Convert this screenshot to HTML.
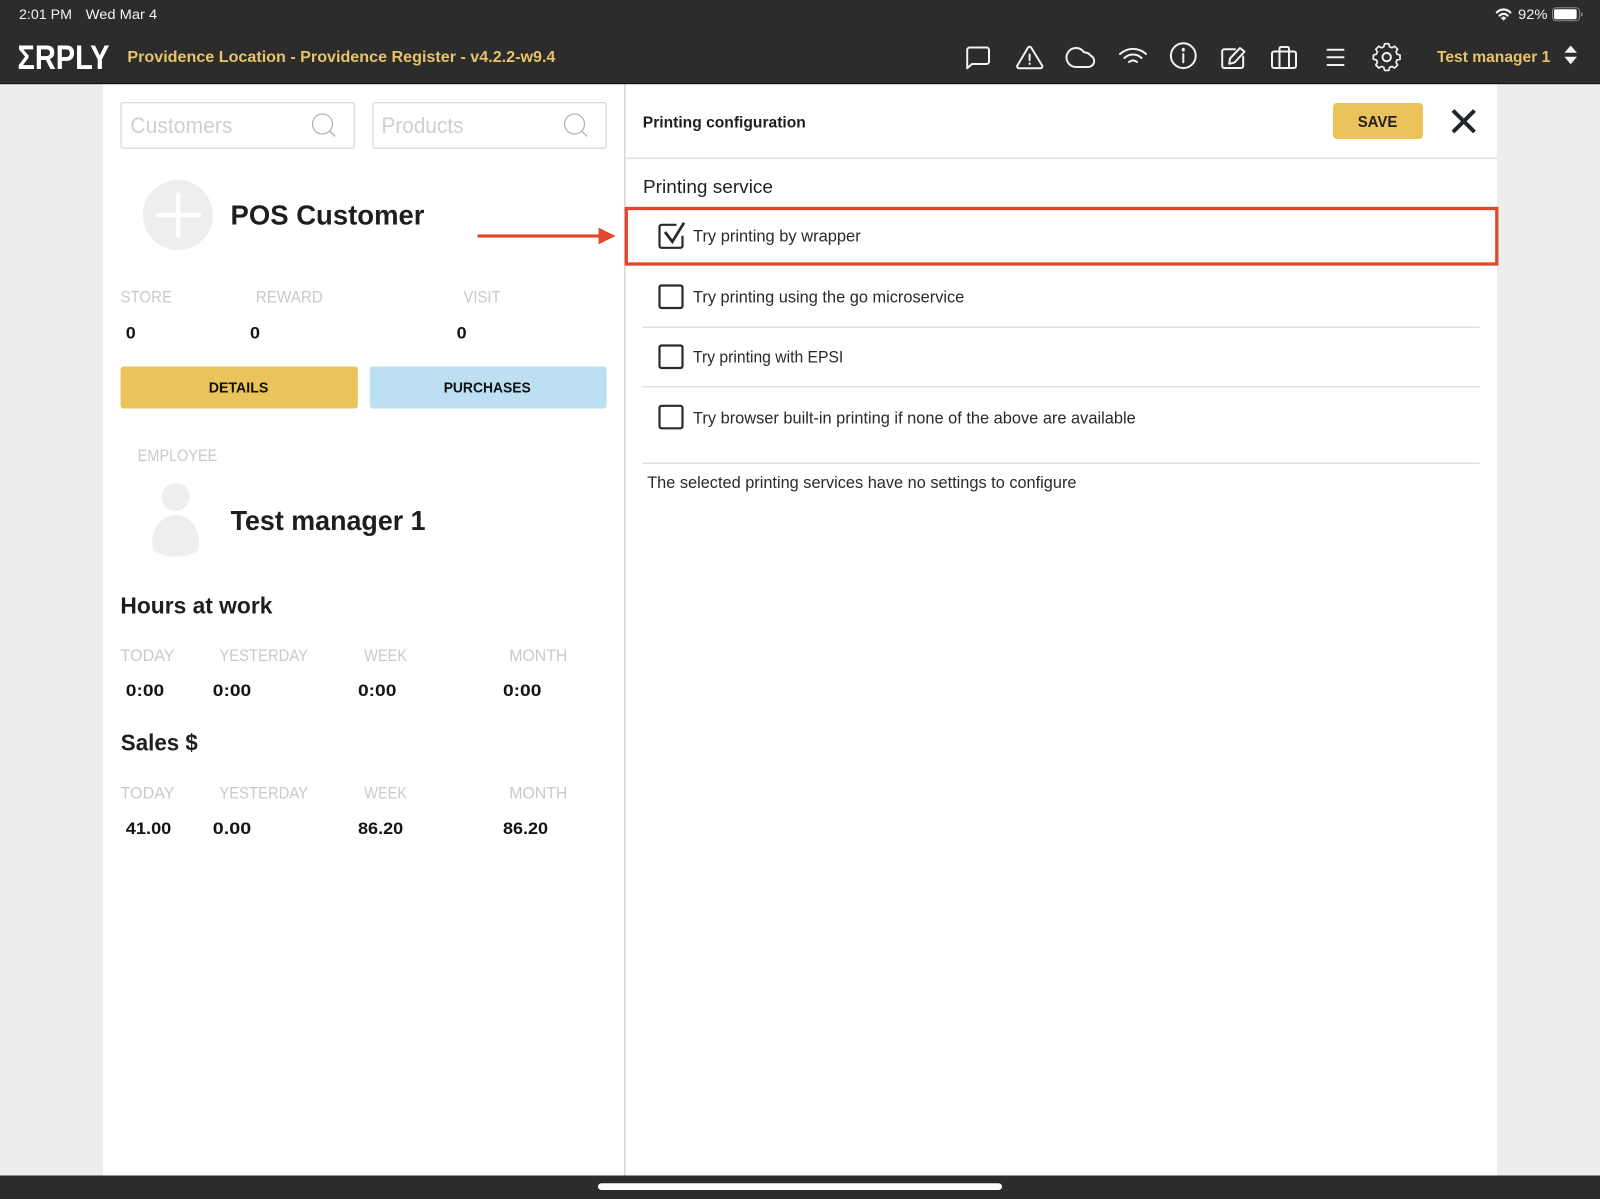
<!DOCTYPE html>
<html lang="en">
<head>
<meta charset="utf-8">
<title>ERPLY Printing configuration</title>
<style>
html,body{margin:0;padding:0;width:1600px;height:1199px;overflow:hidden;background:#ededed}
svg{display:block}
text{font-family:"Liberation Sans",sans-serif}
.b{font-weight:700}
.lab{fill:#cacaca;font-size:16.5px}
.val{fill:#141414;font-size:16.5px;font-weight:700}
.row{fill:#2a2a2a;font-size:16.5px}
.ico{fill:none;stroke:#f2f2f2;stroke-width:2;stroke-linecap:round;stroke-linejoin:round}
.cb{fill:none;stroke:#2a2a2a;stroke-width:2.2}
.ln{stroke:#dedede;stroke-width:1.3}
</style>
</head>
<body>
<svg width="1600" height="1199" viewBox="0 0 1600 1199" xmlns="http://www.w3.org/2000/svg">
<rect width="1600" height="1199" fill="#ededed"/>
<rect x="103" y="84" width="1394" height="1092" fill="#fff"/>
<rect x="624" y="84" width="1.6" height="1092" fill="#d9d9d9"/>

<!-- header -->
<rect width="1600" height="84" fill="#2c2c2c"/>
<rect y="83" width="1600" height="1.2" fill="#111"/>
<text x="19" y="19" font-size="13.5" fill="#f4f4f4" textLength="53" lengthAdjust="spacingAndGlyphs">2:01 PM</text>
<text x="85.7" y="19" font-size="13.5" fill="#f4f4f4" textLength="71.5" lengthAdjust="spacingAndGlyphs">Wed Mar 4</text>
<text x="17.5" y="69" font-size="34.5" class="b" fill="#fff" textLength="92" lengthAdjust="spacingAndGlyphs">ΣRPLY</text>
<text x="127.4" y="62" font-size="16" class="b" fill="#e8c468" textLength="428" lengthAdjust="spacingAndGlyphs">Providence Location - Providence Register - v4.2.2-w9.4</text>

<!-- status right -->
<g fill="none" stroke="#f4f4f4" stroke-width="2.2" stroke-linecap="round">
<path d="M1496.8 12.4c4-3.9 9.600-3.900 13.600 0"/>
<path d="M1499.600 15.600c2.500-2.400 5.500-2.400 8 0"/>
</g>
<path d="M1500.800 18l2.800-1.800 2.800 1.800-2.800 2.600z" fill="#f4f4f4"/>
<text x="1518" y="19" font-size="13.5" fill="#f4f4f4" textLength="29.5" lengthAdjust="spacingAndGlyphs">92%</text>
<rect x="1552.5" y="7.7" width="27" height="13" rx="3.5" fill="none" stroke="#8c8c8c" stroke-width="1"/>
<rect x="1554" y="9.2" width="22.700" height="10" rx="2" fill="#fff"/>
<path d="M1581 12v4.6c1.2-.4 1.7-1.3 1.7-2.3s-.5-1.9-1.7-2.3z" fill="#8c8c8c"/>

<!-- toolbar icons -->
<path class="ico" d="M970.5 47.500h16a2.500 2.500 0 0 1 2.500 2.500v11.500a2.500 2.500 0 0 1-2.500 2.500h-14.500l-4.800 4.200v-18.200a2.500 2.500 0 0 1 2.800-2.500z"/>
<path class="ico" d="M1027.800 47.600a2 2 0 0 1 3.200 0l11 18a1.800 1.800 0 0 1-1.600 2.600h-21.700a1.800 1.800 0 0 1-1.600-2.600z" transform="translate(0.2 0)"/>
<path class="ico" d="M1029.600 54.500v5.800" stroke-width="1.600"/>
<path d="M1029.600 63.400v.6" stroke="#f2f2f2" stroke-width="2" stroke-linecap="round"/>
<path class="ico" d="M1088 67h-12a9.500 9.500 0 1 1 7.900-14.800c3.600.2 5.800 1.800 6.400 3.200a6 6 0 0 1-2.300 11.600z"/>
<g class="ico">
<path d="M1120 54c7.600-6.900 18.400-6.900 26 0"/>
<path d="M1124.400 58c5.200-4.600 12-4.600 17.200 0"/>
<path d="M1129 62c2.800-2.200 5.200-2.200 8 0"/>
</g>
<circle class="ico" cx="1183.3" cy="55.7" r="12.4"/>
<path class="ico" d="M1183.3 54v8.400" stroke-width="2.400"/>
<path d="M1183.3 49.300v.8" stroke="#f2f2f2" stroke-width="3" stroke-linecap="round"/>
<path class="ico" d="M1235 49.200h-10.800a2 2 0 0 0-2 2v14.800a2 2 0 0 0 2 2h17a2 2 0 0 0 2-2v-9.500"/>
<path class="ico" d="M1230 58.500l10-10.500 4.500 3.700-10 10.800-5.300 1.300z"/>
<path class="ico" d="M1274 51.500h20a2 2 0 0 1 2 2v12.500a2 2 0 0 1-2 2h-20a2 2 0 0 1-2-2v-12.500a2 2 0 0 1 2-2z"/>
<path class="ico" d="M1279.500 51.500v-3a1.500 1.500 0 0 1 1.500-1.500h6.500a1.500 1.500 0 0 1 1.500 1.500v3M1279.500 51.500v16.500M1289 51.500v16.500"/>
<g class="ico" stroke-width="2.200"><path d="M1327.500 49.700h16M1327.500 57.300h16M1327.500 65h16"/></g>
<circle class="ico" cx="1386.7" cy="57.1" r="4.200"/>
<path class="ico" d="M1384.200 44.300h5l.9 3.500 2.700 1.200 3.200-1.800 3.500 3.500-1.800 3.200 1.100 2.700 3.600 1v4.900l-3.600.9-1.100 2.700 1.800 3.200-3.500 3.500-3.200-1.800-2.700 1.100-.9 3.600h-5l-.9-3.600-2.700-1.100-3.200 1.800-3.500-3.500 1.800-3.200-1.100-2.700-3.600-.9v-4.900l3.600-1 1.100-2.700-1.800-3.200 3.500-3.500 3.200 1.800 2.700-1.200z" stroke-width="2.300" transform="translate(1386.7 57.1) scale(.85) translate(-1386.7 -60)"/>
<text x="1437" y="62" font-size="16" class="b" fill="#e8c468" textLength="113.300" lengthAdjust="spacingAndGlyphs">Test manager 1</text>
<path d="M1570.700 45.500l6.300 7.300h-12.600zM1570.700 64.300l-6.300-7.600h12.600z" fill="#f4f4f4"/>

<!-- search boxes -->
<rect x="121" y="102.700" width="233.200" height="45.500" rx="2" fill="#fff" stroke="#d2d2d2" stroke-width="1.100"/>
<rect x="373" y="102.700" width="233.200" height="45.500" rx="2" fill="#fff" stroke="#d2d2d2" stroke-width="1.100"/>
<text x="130.400" y="133" font-size="22" fill="#cfcfcf" textLength="102" lengthAdjust="spacingAndGlyphs">Customers</text>
<text x="381.500" y="133" font-size="22" fill="#cfcfcf" textLength="82" lengthAdjust="spacingAndGlyphs">Products</text>
<g fill="none" stroke="#b4b4b4" stroke-width="1.300" stroke-linecap="round">
<circle cx="322.500" cy="124" r="10"/><path d="M329.700 131l5 5"/>
<circle cx="574.500" cy="124" r="10"/><path d="M581.700 131l5 5"/>
</g>

<!-- customer -->
<circle cx="177.800" cy="215" r="35" fill="#eeeeee"/>
<path d="M157.800 215h41M178.300 194.500v41" stroke="#fff" stroke-width="4.500" stroke-linecap="round"/>
<text x="230.500" y="224.300" font-size="28" class="b" fill="#1e1e1e" textLength="194" lengthAdjust="spacingAndGlyphs">POS Customer</text>

<!-- arrow -->
<path d="M477.600 236H600" stroke="#e2472c" stroke-width="3.200"/>
<path d="M598.600 227.700L615.600 236l-17 8.200z" fill="#e2472c"/>

<!-- customer stats -->
<text x="120.500" y="302.700" class="lab" textLength="51.500" lengthAdjust="spacingAndGlyphs">STORE</text>
<text x="255.800" y="302.700" class="lab" textLength="67" lengthAdjust="spacingAndGlyphs">REWARD</text>
<text x="463.500" y="302.700" class="lab" textLength="37" lengthAdjust="spacingAndGlyphs">VISIT</text>
<text x="125.800" y="338.300" class="val" textLength="10" lengthAdjust="spacingAndGlyphs">0</text>
<text x="250" y="338.300" class="val" textLength="10" lengthAdjust="spacingAndGlyphs">0</text>
<text x="456.700" y="338.300" class="val" textLength="10" lengthAdjust="spacingAndGlyphs">0</text>

<!-- buttons -->
<rect x="120.600" y="366.500" width="237.200" height="42" rx="3" fill="#ebc35b"/>
<rect x="369.800" y="366.500" width="236.800" height="42" rx="3" fill="#bcdff2"/>
<text x="208.800" y="392.500" font-size="15" class="b" fill="#111" textLength="59.500" lengthAdjust="spacingAndGlyphs">DETAILS</text>
<text x="443.700" y="392.500" font-size="15" class="b" fill="#111" textLength="87" lengthAdjust="spacingAndGlyphs">PURCHASES</text>

<!-- employee -->
<text x="137.800" y="461.200" class="lab" textLength="79.500" lengthAdjust="spacingAndGlyphs">EMPLOYEE</text>
<circle cx="175.700" cy="497" r="14" fill="#eeeeee"/>
<path d="M175.700 515c14 0 23.500 13 23.500 28 0 2-.3 4.500-1 6-1.500 4-11.500 7.500-22.500 7.500s-21-3.500-22.500-7.500c-.7-1.500-1-4-1-6 0-15 9.500-28 23.500-28z" fill="#eeeeee"/>
<text x="230.600" y="530" font-size="28" class="b" fill="#1e1e1e" textLength="195" lengthAdjust="spacingAndGlyphs">Test manager 1</text>

<!-- hours -->
<text x="120.400" y="613.300" font-size="23.500" class="b" fill="#1e1e1e" textLength="152" lengthAdjust="spacingAndGlyphs">Hours at work</text>
<text x="120.500" y="661.100" class="lab" textLength="54" lengthAdjust="spacingAndGlyphs">TODAY</text>
<text x="219.400" y="661.100" class="lab" textLength="88.600" lengthAdjust="spacingAndGlyphs">YESTERDAY</text>
<text x="364.300" y="661.100" class="lab" textLength="42.700" lengthAdjust="spacingAndGlyphs">WEEK</text>
<text x="509.200" y="661.100" class="lab" textLength="58.200" lengthAdjust="spacingAndGlyphs">MONTH</text>
<text x="125.800" y="696" class="val" textLength="38.400" lengthAdjust="spacingAndGlyphs">0:00</text>
<text x="212.800" y="696" class="val" textLength="38.400" lengthAdjust="spacingAndGlyphs">0:00</text>
<text x="358" y="696" class="val" textLength="38.400" lengthAdjust="spacingAndGlyphs">0:00</text>
<text x="503" y="696" class="val" textLength="38.400" lengthAdjust="spacingAndGlyphs">0:00</text>

<!-- sales -->
<text x="120.800" y="750.700" font-size="23.500" class="b" fill="#1e1e1e" textLength="77" lengthAdjust="spacingAndGlyphs">Sales $</text>
<text x="120.500" y="798.500" class="lab" textLength="54" lengthAdjust="spacingAndGlyphs">TODAY</text>
<text x="219.400" y="798.500" class="lab" textLength="88.600" lengthAdjust="spacingAndGlyphs">YESTERDAY</text>
<text x="364.300" y="798.500" class="lab" textLength="42.700" lengthAdjust="spacingAndGlyphs">WEEK</text>
<text x="509.200" y="798.500" class="lab" textLength="58.200" lengthAdjust="spacingAndGlyphs">MONTH</text>
<text x="125.800" y="834" class="val" textLength="45.500" lengthAdjust="spacingAndGlyphs">41.00</text>
<text x="212.800" y="834" class="val" textLength="38.400" lengthAdjust="spacingAndGlyphs">0.00</text>
<text x="358" y="834" class="val" textLength="45.200" lengthAdjust="spacingAndGlyphs">86.20</text>
<text x="503" y="834" class="val" textLength="45" lengthAdjust="spacingAndGlyphs">86.20</text>

<!-- right panel -->
<text x="642.800" y="127.300" font-size="15.500" class="b" fill="#1e1e1e" textLength="163" lengthAdjust="spacingAndGlyphs">Printing configuration</text>
<rect x="1333" y="103" width="90" height="36" rx="4" fill="#ebc35b"/>
<text x="1357.700" y="127" font-size="15.500" class="b" fill="#1e1e1e" textLength="39.700" lengthAdjust="spacingAndGlyphs">SAVE</text>
<path d="M1453 110.500l21.500 21.500M1474.500 110.500L1453 132" stroke="#22262a" stroke-width="4"/>
<path class="ln" d="M626 158.300H1497"/>
<text x="643" y="193" font-size="18" fill="#222" textLength="130" lengthAdjust="spacingAndGlyphs">Printing service</text>

<path class="cb" d="M676.500 224.800h-15a2 2 0 0 0-2 2v19a2 2 0 0 0 2 2h19a2 2 0 0 0 2-2v-10"/>
<path d="M665 232l7.300 9.700L684 222.800" fill="none" stroke="#2a2a2a" stroke-width="2.800"/>
<text x="693" y="241.700" class="row" textLength="167.700" lengthAdjust="spacingAndGlyphs">Try printing by wrapper</text>

<rect class="cb" x="659.500" y="285.500" width="23" height="22.500" rx="2"/>
<text x="693" y="302.700" class="row" textLength="271.300" lengthAdjust="spacingAndGlyphs">Try printing using the go microservice</text>
<path class="ln" d="M642.700 327.300H1479.600"/>

<rect class="cb" x="659.500" y="345.500" width="23" height="22.500" rx="2"/>
<text x="693" y="362.700" class="row" textLength="150.300" lengthAdjust="spacingAndGlyphs">Try printing with EPSI</text>
<path class="ln" d="M642.700 386.700H1479.600"/>

<rect class="cb" x="659.500" y="405.800" width="23" height="22.500" rx="2"/>
<text x="693" y="423.300" class="row" textLength="442.700" lengthAdjust="spacingAndGlyphs">Try browser built-in printing if none of the above are available</text>
<path class="ln" d="M642.700 463.300H1479.600"/>
<text x="647.200" y="488" class="row" textLength="429.300" lengthAdjust="spacingAndGlyphs">The selected printing services have no settings to configure</text>

<!-- highlight -->
<rect x="626.300" y="208.500" width="870.500" height="55.500" fill="none" stroke="#e2472c" stroke-width="3.300"/>

<!-- footer -->
<rect y="1175.500" width="1600" height="23.500" fill="#2c2c2c"/>
<rect x="598" y="1183.200" width="404" height="6.800" rx="3.400" fill="#fff"/>
</svg>
</body>
</html>
